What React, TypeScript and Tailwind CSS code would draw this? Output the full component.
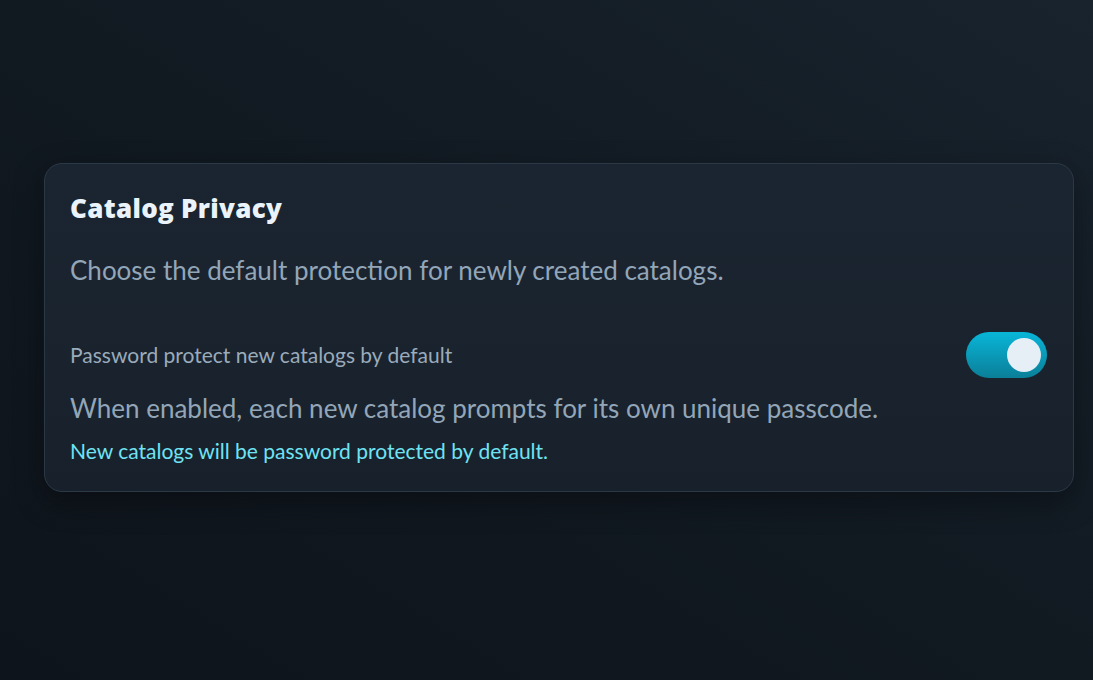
export default function App() {
  return (
    <div
      className="min-h-screen w-full bg-gradient-to-bl from-[#18232d] via-[#111921] to-[#0e141b] pt-[163px] pl-[44px] pr-[20px]"
      style={{ fontFamily: "Lato, 'Noto Sans', sans-serif" }}
    >
      <div className="w-[1030px] rounded-[18px] border border-[#2b3846] bg-gradient-to-b from-[#1b2531] to-[#18212b] pl-[25px] pr-[26px] pt-[27px] pb-[26px] shadow-[0_10px_30px_rgba(0,0,0,0.35)]">
        <h2
          className="text-[26px] font-extrabold leading-[34px] tracking-[0.3px] text-[#eaf2fa]"
          style={{ fontFamily: "'Open Sans', Lato, sans-serif" }}
        >
          Catalog Privacy
        </h2>
        <p className="mt-[28px] text-[26px] leading-[34px] text-[#93a6b8]">
          Choose the default protection for newly created catalogs.
        </p>
        <div className="mt-[45px] flex items-center justify-between">
          <span className="text-[21px] leading-[28px] text-[#9aabbb]">Password protect new catalogs by default</span>
          <div className="flex h-[46px] w-[81px] items-center justify-end rounded-full bg-gradient-to-b from-[#08b6d8] to-[#0a7f99] pr-[6px]">
            <div className="h-[34px] w-[34px] rounded-full bg-[#e6eef6]" />
          </div>
        </div>
        <p className="mt-[13px] text-[26px] leading-[34px] text-[#93a6b8]">
          When enabled, each new catalog prompts for its own unique passcode.
        </p>
        <p className="mt-[12px] text-[21px] leading-[28px] text-[#6fe3f3]">
          New catalogs will be password protected by default.
        </p>
      </div>
    </div>
  );
}
